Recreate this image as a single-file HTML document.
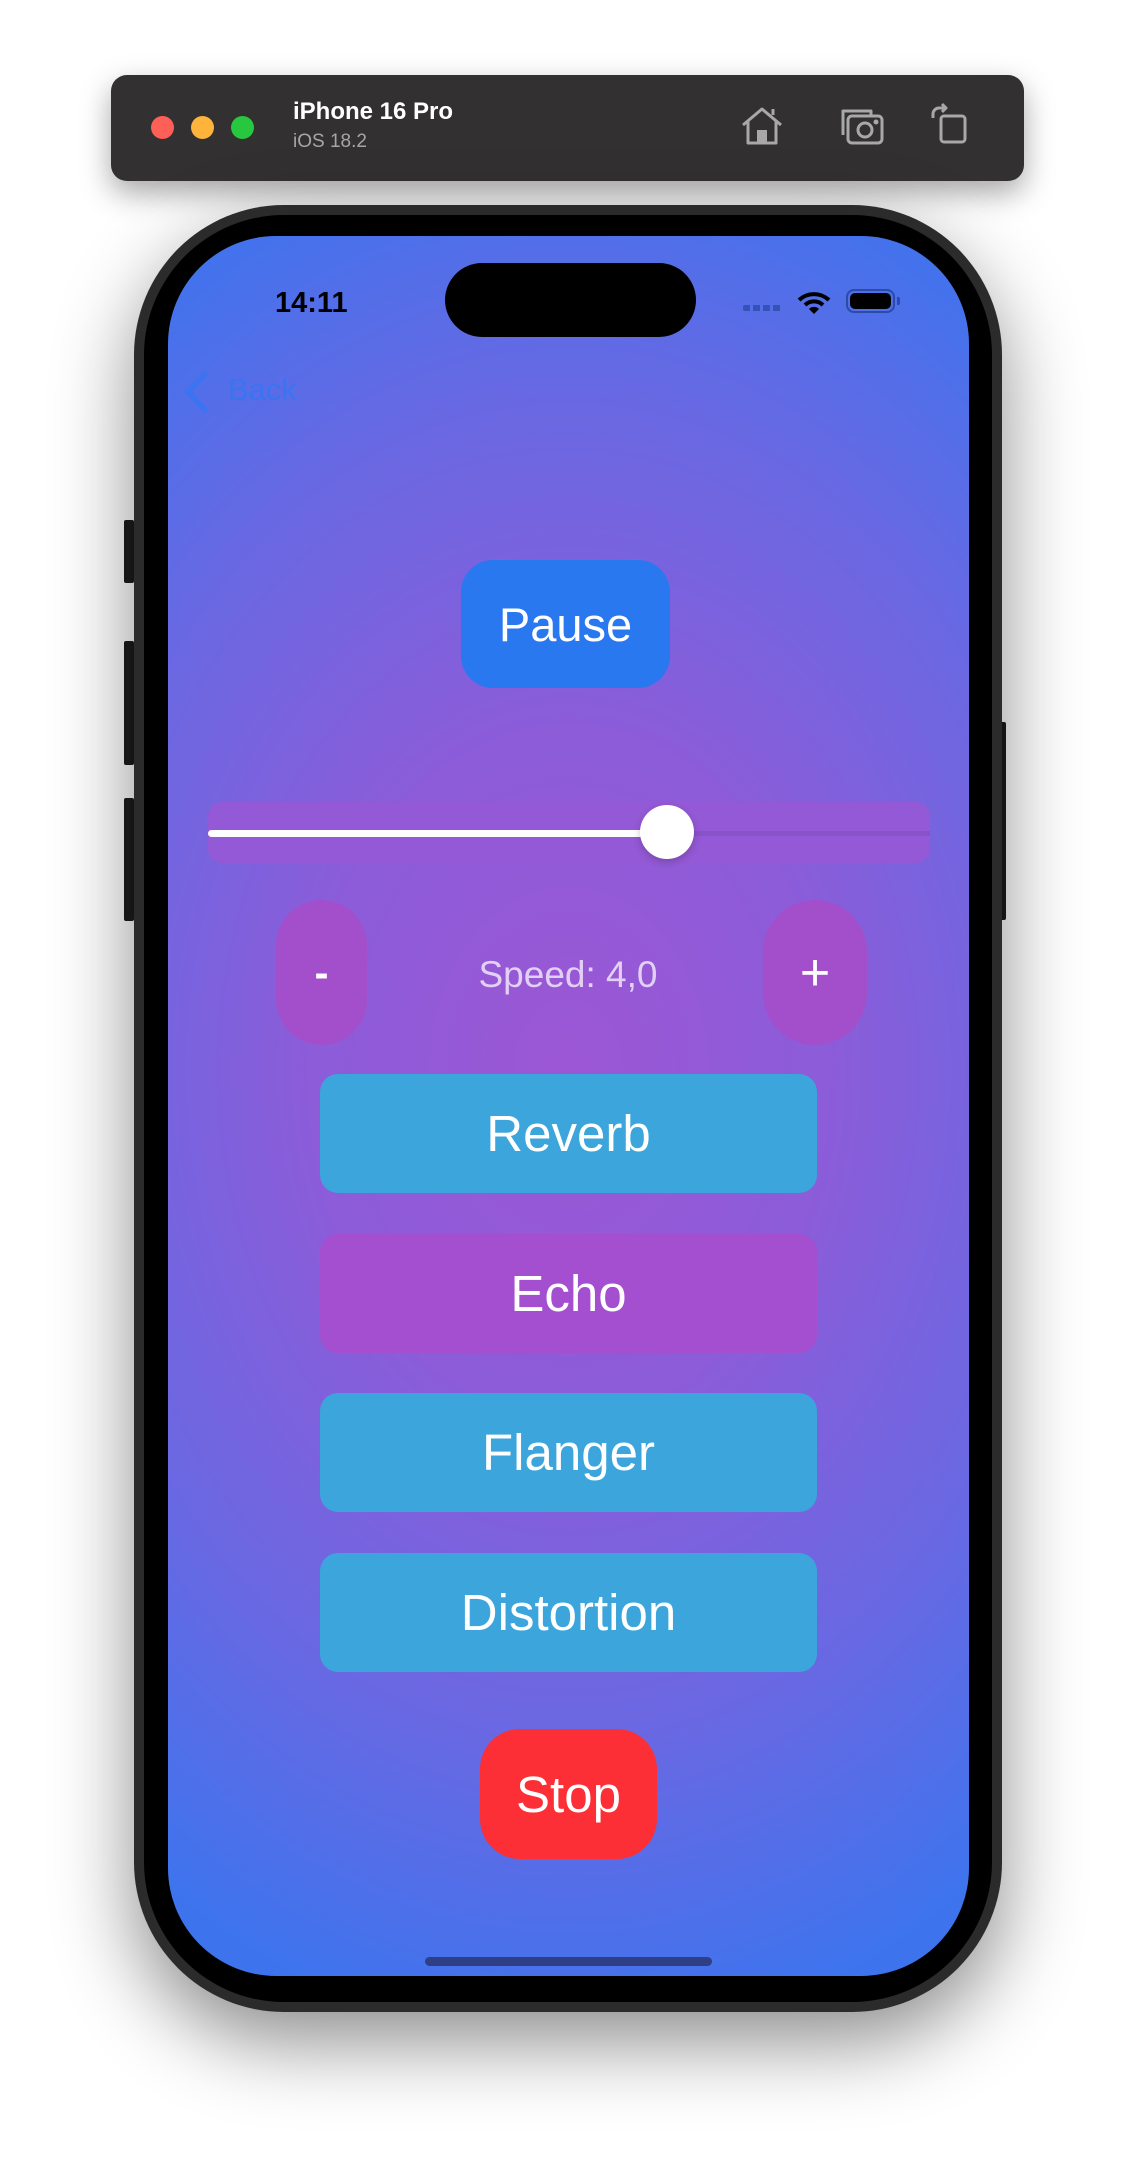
<!DOCTYPE html>
<html><head><meta charset="utf-8"><style>
*{margin:0;padding:0;box-sizing:border-box}
body{width:1136px;height:2166px;background:#fff;position:relative;overflow:hidden;font-family:"Liberation Sans",sans-serif}
.abs{position:absolute}
.toolbar{left:111px;top:75px;width:913px;height:106px;background:#323030;border-radius:16px;box-shadow:0 12px 30px rgba(0,0,0,0.35)}
.tl{width:23px;height:23px;border-radius:50%;top:116px}
.frame{left:134px;top:205px;width:868px;height:1807px;border-radius:150px;background:#2b2b2b;box-shadow:0 30px 80px rgba(0,0,0,0.45)}
.bezel{left:144px;top:215px;width:848px;height:1787px;border-radius:140px;background:#000}
.screen{left:168px;top:236px;width:801px;height:1740px;border-radius:108px;overflow:hidden;
background:radial-gradient(ellipse 92% 56% at 50% 48%,#9c57d5 0%,#8c5cd9 35%,#6a68e2 68%,#3d74ee 100%)}
.btn{position:absolute;color:#fff;display:flex;align-items:center;justify-content:center}
.side{background:#1c1c1c;width:10px;border-radius:2px}
</style></head><body>
<div class="abs toolbar"></div>
<div class="abs tl" style="left:151px;background:#fe5f57"></div>
<div class="abs tl" style="left:191px;background:#fdb33c"></div>
<div class="abs tl" style="left:231px;background:#27c840"></div>
<div class="abs" style="left:293px;top:98px;color:#fff;font-weight:bold;font-size:24px">iPhone 16 Pro</div>
<div class="abs" style="left:293px;top:131px;color:#a6a6a6;font-size:19px">iOS 18.2</div>
<svg class="abs" style="left:740px;top:106px" width="44" height="40" viewBox="0 0 44 40" fill="none" stroke="#a8a8a8" stroke-width="3" stroke-linejoin="round">
<path d="M3 19 L22 3 L41 19"/><path d="M8 15 V37 H36 V15"/><rect x="17" y="24" width="10" height="13" fill="#a8a8a8" stroke="none"/><path d="M33 9 V3"/></svg>
<svg class="abs" style="left:838px;top:106px" width="48" height="40" viewBox="0 0 48 40" fill="none" stroke="#a8a8a8" stroke-width="3" stroke-linejoin="round">
<path d="M5 29 V5 H33 V9"/><rect x="10" y="10" width="34" height="27" rx="4"/><circle cx="27" cy="24" r="7"/><circle cx="38" cy="16" r="1" fill="#a8a8a8"/></svg>
<svg class="abs" style="left:930px;top:102px" width="40" height="44" viewBox="0 0 40 44" fill="none" stroke="#a8a8a8" stroke-width="3" stroke-linejoin="round">
<rect x="11" y="14" width="24" height="26" rx="3"/><path d="M3 16 V12 A6 6 0 0 1 9 6 H14"/><path d="M12 2 L16 6 L12 10" fill="#a8a8a8"/></svg>

<div class="abs side" style="left:124px;top:520px;height:63px"></div>
<div class="abs side" style="left:124px;top:641px;height:124px"></div>
<div class="abs side" style="left:124px;top:798px;height:123px"></div>
<div class="abs side" style="left:996px;top:722px;height:198px"></div>
<div class="abs frame"></div>
<div class="abs bezel"></div>
<div class="abs screen">
 <div class="abs" style="left:277px;top:27px;width:251px;height:74px;border-radius:37px;background:#000"></div>
 <div class="abs" style="left:107px;top:51px;font-size:29px;font-weight:bold;color:#000">14:11</div>
 <div class="abs" style="left:575px;top:69px;width:38px;height:6px;background:repeating-linear-gradient(90deg,#3452b8 0 7px,transparent 7px 10px);border-radius:2px"></div>
 <svg class="abs" style="left:629px;top:56px" width="34" height="22" viewBox="0 0 34 22"><path d="M2 8 A22 22 0 0 1 32 8" stroke="#000" stroke-width="4" fill="none"/><path d="M8 13 A13 13 0 0 1 26 13" stroke="#000" stroke-width="4" fill="none"/><path d="M12 17 L17 22 L22 17 A7 7 0 0 0 12 17Z" fill="#000"/></svg>
 <div class="abs" style="left:678px;top:53px;width:49px;height:24px;border:2px solid #2c4aa6;border-radius:8px;padding:2px"><div style="width:100%;height:100%;background:#000;border-radius:5px"></div></div>
 <div class="abs" style="left:729px;top:61px;width:3px;height:8px;background:#2c4aa6;border-radius:0 2px 2px 0"></div>
 <svg class="abs" style="left:15px;top:135px" width="26" height="42" viewBox="0 0 26 42"><path d="M22 3 L5 21 L22 39" stroke="#3a74f0" stroke-width="5" fill="none" stroke-linecap="round" stroke-linejoin="round"/></svg>
 <div class="abs" style="left:60px;top:136px;font-size:31px;color:#3a74f0">Back</div>

 <div class="btn" style="left:293px;top:324px;width:209px;height:128px;border-radius:32px;background:#2a78f0;font-size:47px">Pause</div>

 <div class="abs" style="left:40px;top:566px;width:722px;height:61px;border-radius:14px;background:#9459d6"></div>
 <div class="abs" style="left:40px;top:594px;width:459px;height:7px;border-radius:4px;background:#fff"></div>
 <div class="abs" style="left:499px;top:595px;width:263px;height:5px;background:#8852c9"></div>
 <div class="abs" style="left:472px;top:569px;width:54px;height:54px;border-radius:50%;background:#fff;box-shadow:0 3px 8px rgba(0,0,0,0.2)"></div>

 <div class="btn" style="left:108px;top:664px;width:91px;height:145px;border-radius:46px;background:#a34fcc;font-size:42px;font-weight:bold">-</div>
 <div class="btn" style="left:595px;top:664px;width:104px;height:145px;border-radius:52px;background:#a34fcc;font-size:52px">+</div>
 <div class="btn" style="left:250px;top:714px;width:300px;height:50px;font-size:37px;color:rgba(255,255,255,0.72)">Speed: 4,0</div>

 <div class="btn" style="left:152px;top:838px;width:497px;height:119px;border-radius:18px;background:#3ba5dc;font-size:51px">Reverb</div>
 <div class="btn" style="left:152px;top:998px;width:497px;height:119px;border-radius:18px;background:#a34fcf;font-size:51px">Echo</div>
 <div class="btn" style="left:152px;top:1157px;width:497px;height:119px;border-radius:18px;background:#3ba5dc;font-size:51px">Flanger</div>
 <div class="btn" style="left:152px;top:1317px;width:497px;height:119px;border-radius:18px;background:#3ba5dc;font-size:51px">Distortion</div>

 <div class="btn" style="left:312px;top:1493px;width:177px;height:130px;border-radius:40px;background:#fb2f35;font-size:51px">Stop</div>

 <div class="abs" style="left:257px;top:1721px;width:287px;height:9px;border-radius:5px;background:#2e3f86"></div>
</div>
</body></html>
